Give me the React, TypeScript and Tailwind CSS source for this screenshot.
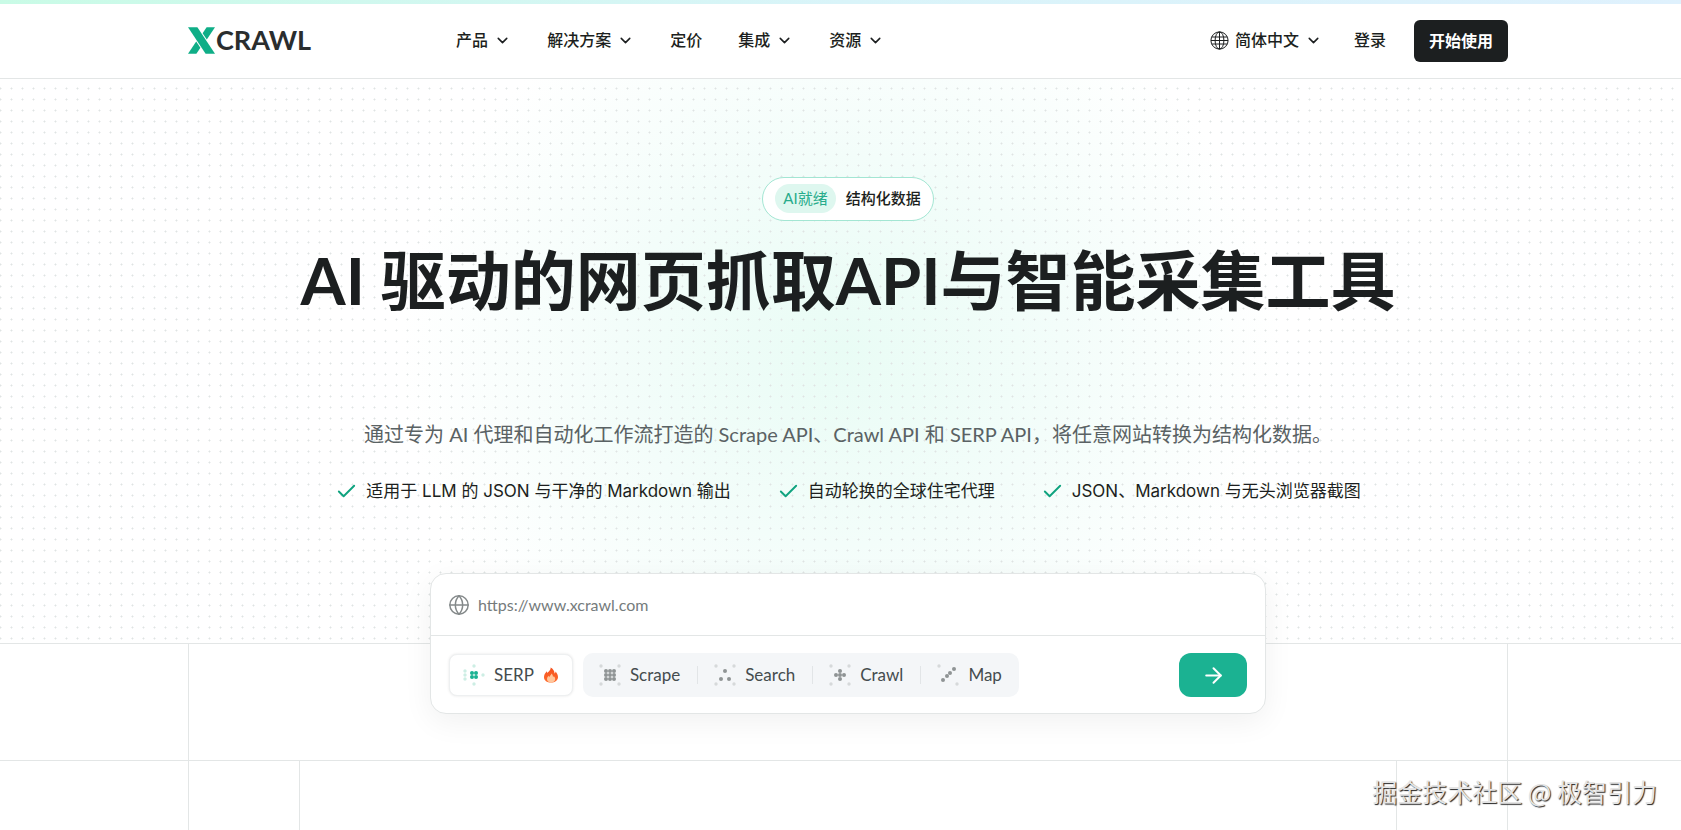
import React from "react";
import { ArrowRight, Check, ChevronDown, Globe } from "lucide-react";

function LogoMark() {
  return (
    <svg width="27" height="27" viewBox="0 0 27 27" fill="#0fae87" aria-hidden="true">
      <path d="M0 0.3H9.4L27 26.7H17.6Z" />
      <path d="M18.6 0.3H27L18.8 12.6L14.6 6.3Z" />
      <path d="M8.4 26.7H0L8.2 14.4L12.4 20.7Z" />
    </svg>
  );
}

function GridGlobe() {
  return (
    <svg width="19" height="19" viewBox="0 0 19 19" fill="none" stroke="#1c1f20" strokeWidth="1" aria-hidden="true">
      <circle cx="9.5" cy="9.5" r="8.6" />
      <ellipse cx="9.5" cy="9.5" rx="4.4" ry="8.6" />
      <path d="M9.5 1V18M1.8 6H17.2M1.8 13H17.2M1 9.5H18" />
    </svg>
  );
}

type Dot = [number, number];

const cornerDots: Dot[] = [[2, 2], [20, 2], [2, 20], [20, 20]];

function DotIcon({ dots, faint, active = false }: { dots: Dot[]; faint: Dot[]; active?: boolean }) {
  return (
    <svg width="22" height="22" viewBox="0 0 22 22" aria-hidden="true">
      {faint.map(([x, y]) => (
        <circle key={`f${x}-${y}`} cx={x} cy={y} r="1.7" fill={active ? "#cdeee4" : "#d6d9da"} />
      ))}
      {dots.map(([x, y]) => (
        <circle key={`d${x}-${y}`} cx={x} cy={y} r="2" fill={active ? "#1bb292" : "#8f9495"} />
      ))}
    </svg>
  );
}

function Flame() {
  return (
    <svg width="16" height="16" viewBox="0 0 16 16" aria-hidden="true">
      <defs>
        <linearGradient id="flame" x1="0" y1="0" x2="0" y2="1">
          <stop offset="0" stopColor="#f4511e" />
          <stop offset="1" stopColor="#ff6a2b" />
        </linearGradient>
      </defs>
      <path
        d="M7.6 0.5C8 3 5.6 4.2 4.6 6C4.2 5.4 4 4.8 3.9 4.2C2 6 1 8 1 10.2C1 13.4 4 15.6 8 15.6C12 15.6 15 13.4 15 10C15 7.6 13.8 6 12.6 4.4C12.5 5.4 12.2 6 11.6 6.6C11.4 3.8 10 1.6 7.6 0.5Z"
        fill="url(#flame)"
      />
      <path
        d="M8.4 6.6C8.4 8.2 6.8 8.8 6.4 10C6 9.7 5.8 9.2 5.8 8.8C4.6 9.8 4 10.9 4 12.2C4 14.2 5.6 15.4 8 15.4C10.5 15.4 12.2 14.2 12.2 12C12.2 10.6 11.4 9.8 10.8 8.9C10.6 9.5 10.4 9.8 10 10C10 8.6 9.5 7.4 8.4 6.6Z"
        fill="#ffc69b"
      />
    </svg>
  );
}

const nav = [
  { label: "产品", menu: true },
  { label: "解决方案", menu: true },
  { label: "定价", menu: false },
  { label: "集成", menu: true },
  { label: "资源", menu: true },
];

const features = [
  "适用于 LLM 的 JSON 与干净的 Markdown 输出",
  "自动轮换的全球住宅代理",
  "JSON、Markdown 与无头浏览器截图",
];

const modes: { label: string; dots: Dot[]; faint: Dot[] }[] = [
  {
    label: "Scrape",
    dots: [[7, 7], [11, 7], [15, 7], [7, 11], [11, 11], [15, 11], [7, 15], [11, 15], [15, 15]],
    faint: cornerDots,
  },
  { label: "Search", dots: [[11, 7], [7, 15], [15, 15]], faint: cornerDots },
  { label: "Crawl", dots: [[11, 7], [7, 11], [11, 11], [15, 11], [11, 15]], faint: cornerDots },
  { label: "Map", dots: [[17, 5], [13, 9], [10, 12], [6, 16]], faint: [[2, 2], [20, 20]] },
];

function Header() {
  return (
    <header className="border-b border-[#e3e6e6] bg-white">
      <div className="h-1 bg-gradient-to-r from-[#c9fbe6] via-[#d9f4f9] to-[#dff1fd]" />
      <div className="pl-[15px]">
        <div className="mx-auto flex h-[74px] max-w-[1320px] items-center font-medium text-[#1c1f20]">
          <a href="#" className="mr-[145px] flex items-center gap-px pb-0.5" aria-label="XCRAWL">
            <LogoMark />
            <span className="font-['Lato'] text-[27px] leading-[28px] font-bold text-[#2a2d2e]">CRAWL</span>
          </a>
          <nav className="flex flex-1 items-center gap-9 pb-0.5">
            {nav.map((item) =>
              item.menu ? (
                <button key={item.label} type="button" className="flex items-center gap-1.5">
                  {item.label}
                  <ChevronDown size={17} strokeWidth={2.2} />
                </button>
              ) : (
                <a key={item.label} href="#">
                  {item.label}
                </a>
              ),
            )}
          </nav>
          <button type="button" className="flex items-center gap-1.5 pb-0.5">
            <GridGlobe />
            简体中文
            <ChevronDown size={17} strokeWidth={2.2} />
          </button>
          <a href="#" className="ml-8 pb-0.5">登录</a>
          <button type="button" className="ml-7 h-[42px] rounded-md bg-[#1c1f20] px-[15px] font-bold text-white">
            开始使用
          </button>
        </div>
      </div>
    </header>
  );
}

function Hero() {
  return (
    <section className="border-b border-[#e3e6e6] bg-[radial-gradient(circle,#dfe4e3_0.8px,transparent_1.2px),radial-gradient(ellipse_440px_390px_at_50%_48%,#e9fcf5,#f3fdfa_50%,transparent)] bg-[size:11px_11px,100%_100%] bg-[position:-5px_4px,0_0] pb-[139px] pl-[15px]">
      <div className="flex flex-col items-center pt-[98px]">
        <div className="flex h-11 items-center gap-2.5 rounded-full border border-[#a3e6d3] bg-white px-3 pb-0.5 text-[15px] text-[#1c1f20]">
          <span className="rounded-full bg-[#def7ef] px-2 py-1 leading-[21px] text-[#27ab8b]">AI就绪</span>
          <span className="font-medium">结构化数据</span>
        </div>
        <h1 className="mt-[19px] font-['Lato','Noto_Sans_CJK_SC',sans-serif] text-[65px] leading-[80px] font-bold text-[#1c1f20]">
          AI 驱动的网页抓取API与智能采集工具
        </h1>
        <p className="mt-[100px] text-xl leading-[28px] text-[#5a6264]">
          通过专为 AI 代理和自动化工作流打造的 Scrape API、Crawl API 和 SERP API，将任意网站转换为结构化数据。
        </p>
        <ul className="mt-[30px] flex gap-[46px] font-['Inter','Noto_Sans_CJK_SC',sans-serif] text-[17px] leading-[26px] text-[#1c1f20]">
          {features.map((feature) => (
            <li key={feature} className="flex items-center gap-2">
              <Check size={23} strokeWidth={2} color="#0fa37f" />
              {feature}
            </li>
          ))}
        </ul>
      </div>
    </section>
  );
}

function ScrapeForm() {
  return (
    <form
      className="mx-auto w-full max-w-[836px] rounded-2xl border border-[#e3e6e6] bg-white shadow-[0_8px_30px_rgba(0,0,0,0.06)]"
      onSubmit={(e) => e.preventDefault()}
    >
      <label className="flex h-[62px] items-center gap-2 border-b border-[#e3e6e6] px-[17px]">
        <Globe size={22} strokeWidth={1.6} color="#84898a" />
        <input
          type="url"
          aria-label="URL"
          placeholder="https://www.xcrawl.com"
          className="flex-1 bg-transparent text-base outline-none placeholder:text-[#757b7c]"
        />
      </label>
      <div className="flex items-center px-[18px] pt-[17px] pb-4 text-[17px] text-[#454c4e]">
        <button
          type="button"
          className="mr-2.5 flex h-[42px] items-center rounded-lg border border-[#eef0f1] bg-white px-[13px] shadow-[0_0_3px_rgba(0,0,0,0.1)]"
        >
          <DotIcon
            active
            dots={[[9, 9], [13, 9], [9, 13], [13, 13]]}
            faint={[[2, 7], [2, 11], [2, 15], [11, 2], [20, 11], [11, 20]]}
          />
          <span className="mr-[9px] ml-[9px]">SERP</span>
          <Flame />
        </button>
        <div className="flex h-11 items-center divide-x divide-[#e2e5e7] rounded-[10px] bg-[#f4f6f8]">
          {modes.map((mode) => (
            <button key={mode.label} type="button" className="flex h-[18px] items-center gap-[9px] pr-[17px] pl-4">
              <DotIcon dots={mode.dots} faint={mode.faint} />
              {mode.label}
            </button>
          ))}
        </div>
        <button
          type="submit"
          aria-label="Run"
          className="ml-auto flex h-11 w-[68px] items-center justify-center rounded-xl bg-[#1bb292] text-white"
        >
          <ArrowRight size={25} strokeWidth={1.9} />
        </button>
      </div>
    </form>
  );
}

export default function App() {
  return (
    <div className="relative flex min-h-screen flex-col bg-white font-['Lato','Noto_Sans_CJK_SC',sans-serif] text-base">
      <Header />
      <Hero />
      <section className="border-b border-[#e3e6e6] pl-[15px]">
        <div className="mx-auto h-[116px] max-w-[1320px] border-x border-[#e3e6e6]">
          <div className="-translate-y-[71px]">
            <ScrapeForm />
          </div>
        </div>
      </section>
      <section className="flex flex-1 pl-[15px]">
        <div className="mx-auto flex min-h-[69px] w-full max-w-[1320px] justify-center border-x border-[#e3e6e6]">
          <div className="w-full max-w-[1098px] border-x border-[#e3e6e6]" />
        </div>
      </section>
      <p className="absolute right-6 bottom-[22px] font-['Noto_Sans_CJK_SC',sans-serif] text-[25px] leading-[34px] text-[#e4e4e4] [text-shadow:1px_1px_1px_#222]">
        掘金技术社区 @ 极智引力
      </p>
    </div>
  );
}
